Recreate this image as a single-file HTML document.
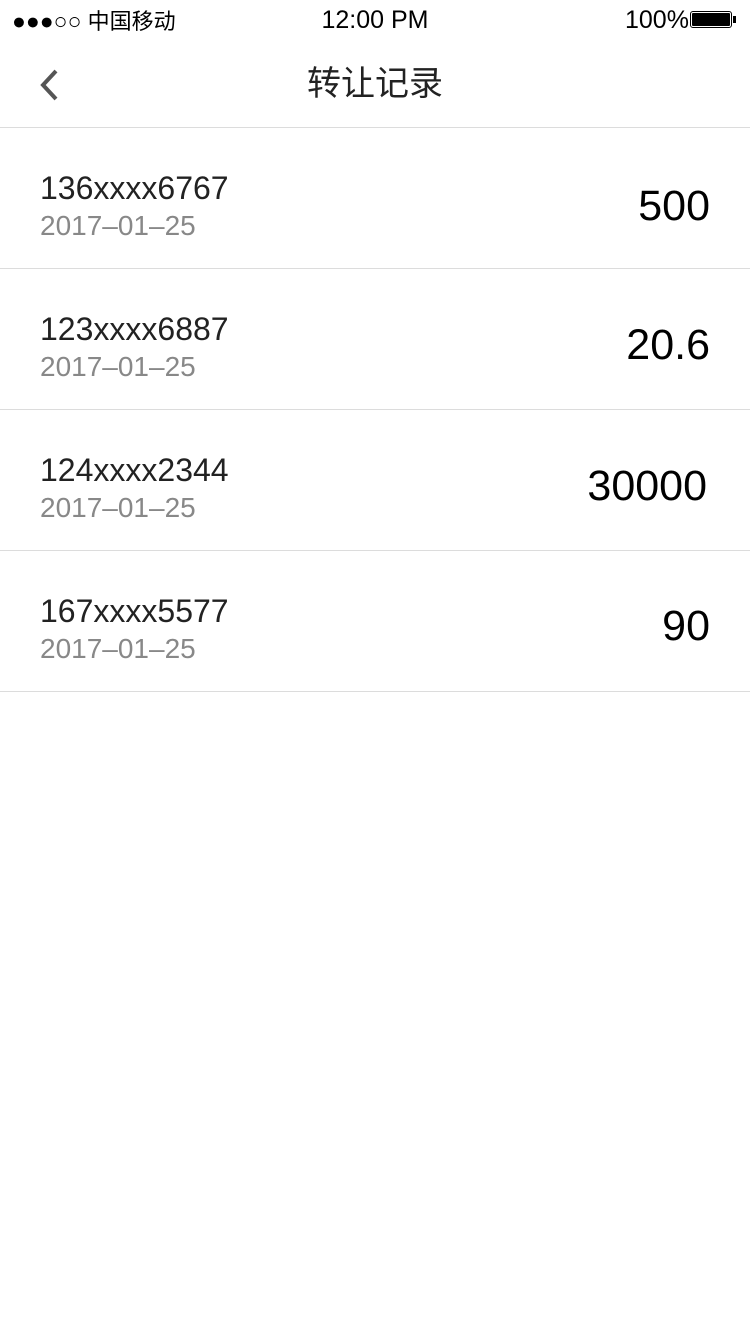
<!DOCTYPE html>
<html><head><meta charset="utf-8"><style>
body{margin:0;width:750px;height:1334px;background:#fff;font-family:"Liberation Sans","Noto Sans CJK SC",sans-serif;position:relative;overflow:hidden}
.abs{position:absolute;white-space:nowrap}
.line{position:absolute;left:0;width:750px;height:1px;background:#dcdcdc}
.name{position:absolute;left:40px;font-size:32px;color:#222;line-height:1}
.date{position:absolute;left:40px;font-size:28px;color:#888;line-height:1}
.amt{position:absolute;right:40px;font-size:43px;color:#000;line-height:1}
</style></head><body>
<div class="abs" style="left:12px;top:8px;font-size:22px;line-height:26px;color:#000"><span style="font-size:23px">●●●○○</span> 中国移动</div>
<div class="abs" style="left:0;width:750px;text-align:center;top:7px;font-size:25px;line-height:26px">12:00 PM</div>
<div class="abs" style="left:625px;top:7px;font-size:25px;line-height:26px">100%</div>
<div class="abs" style="left:690px;top:11px;width:42px;height:17px;border:1px solid #000;border-radius:3px;box-sizing:border-box;padding:1px"><div style="width:100%;height:100%;background:#000;border-radius:1px"></div></div>
<div class="abs" style="left:733px;top:16px;width:3px;height:7px;background:#000"></div>
<svg class="abs" style="left:36px;top:68px" width="24" height="34"><path d="M20 3 L7 17 L20 31" fill="none" stroke="#555" stroke-width="4"/></svg>
<div class="abs" style="left:0;width:750px;text-align:center;top:65px;font-size:34px;line-height:38px;color:#222">转让记录</div>
<div class="line" style="top:127px"></div>

<div class="name" style="top:172px">136xxxx6767</div><div class="date" style="top:212px">2017–01–25</div><div class="amt" style="top:185px">500</div>
<div class="line" style="top:268px"></div>
<div class="name" style="top:313px">123xxxx6887</div><div class="date" style="top:353px">2017–01–25</div><div class="amt" style="top:324px">20.6</div>
<div class="line" style="top:409px"></div>
<div class="name" style="top:454px">124xxxx2344</div><div class="date" style="top:494px">2017–01–25</div><div class="amt" style="top:465px;right:43px">30000</div>
<div class="line" style="top:550px"></div>
<div class="name" style="top:595px">167xxxx5577</div><div class="date" style="top:635px">2017–01–25</div><div class="amt" style="top:605px">90</div>
<div class="line" style="top:691px"></div>
</body></html>
